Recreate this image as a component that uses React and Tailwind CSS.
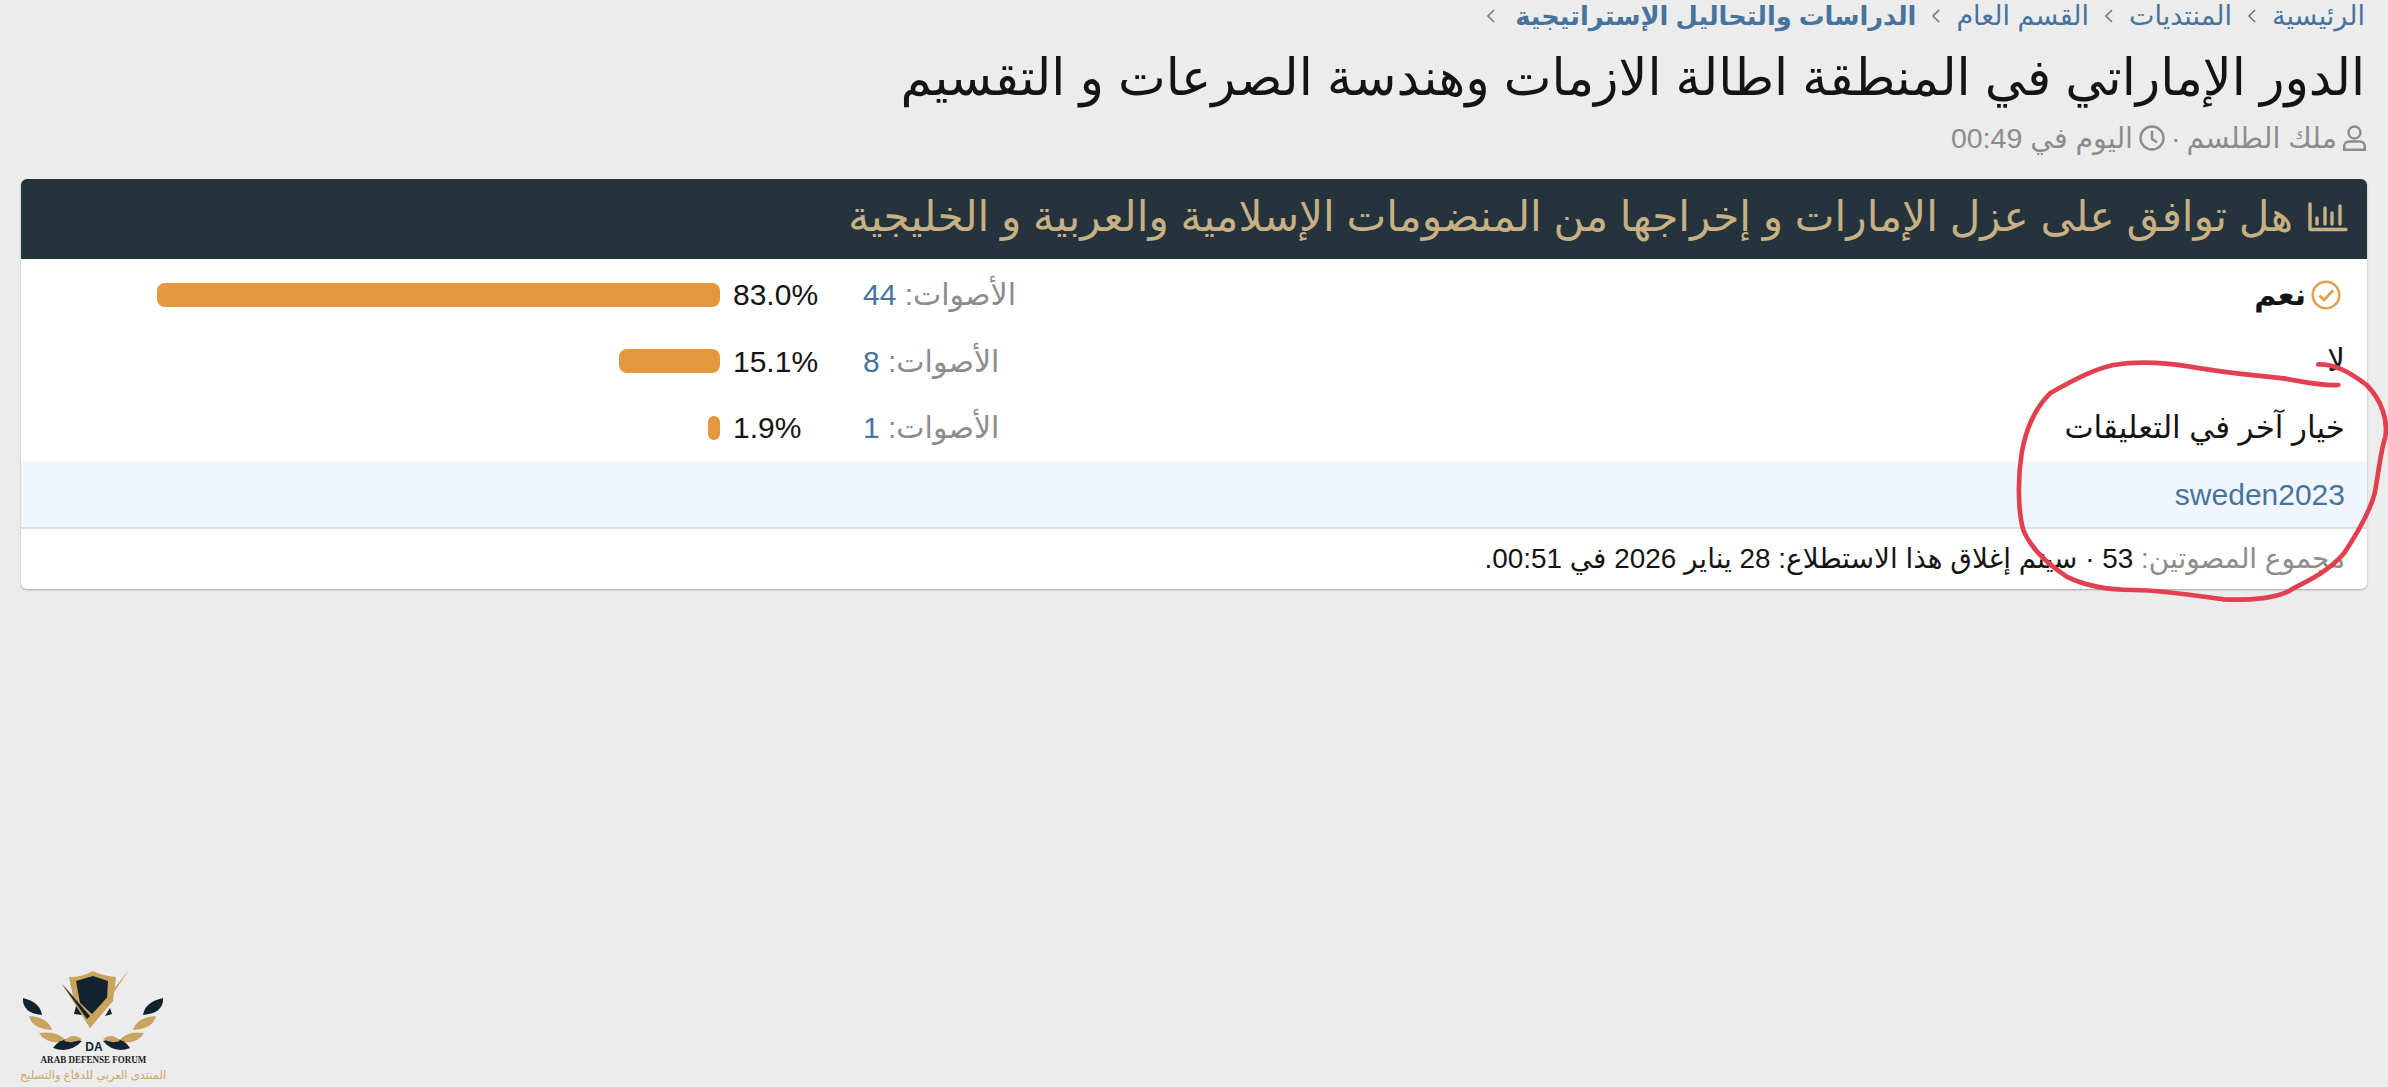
import React from "react";

const rows = [
  { label: "لا", votes: 8, pct: "15.1%", bar: "w-[101px]", labelClass: "text-[31px]" },
  { label: "خيار آخر في التعليقات", votes: 1, pct: "1.9%", bar: "w-[12px]", labelClass: "text-[31px]" },
];

function UserIcon() {
  return (
    <svg className="w-[23px] h-[26px]" viewBox="0 0 23 26" fill="none" stroke="currentColor" strokeWidth="2.4">
      <circle cx="11.5" cy="7.5" r="6" />
      <path d="M6 16.5h11a4.8 4.8 0 0 1 4.8 4.8v3.5H1.2v-3.5A4.8 4.8 0 0 1 6 16.5z" />
    </svg>
  );
}

function ClockIcon() {
  return (
    <svg className="w-[26px] h-[26px]" viewBox="0 0 26 26" fill="none" stroke="currentColor" strokeWidth="2.4">
      <circle cx="13" cy="13" r="11.5" />
      <path d="M13 6v8l5 3.5" />
    </svg>
  );
}

function PollIcon() {
  return (
    <svg className="w-[40px] h-[30px]" viewBox="0 0 40 30" fill="none" stroke="currentColor" strokeWidth="3.4" strokeLinecap="round" strokeLinejoin="round">
      <path d="M2 2v25.5h36" />
      <path d="M9 22v-6M17 22V6M24 22V11M32 22V4" />
    </svg>
  );
}

function CheckIcon() {
  return (
    <svg className="w-[30px] h-[30px] mr-[4px] text-[#dfa050]" viewBox="0 0 30 30" fill="none" stroke="currentColor" strokeWidth="2.6">
      <circle cx="15" cy="15" r="13.3" />
      <path d="M8.5 15.5l4.5 4.5 9-9.5" strokeWidth="2.8" />
    </svg>
  );
}

function Chevron({ className = "" }) {
  return (
    <svg className={`w-[10px] h-[16px] text-[#777] ${className}`} viewBox="0 0 10 16" fill="none" stroke="currentColor" strokeWidth="1.6">
      <path d="M8 2L2 8l6 6" />
    </svg>
  );
}

function VoteRow({ label, labelClass, icon, votes, pct, bar }) {
  return (
    <div className="h-[66.5px] flex items-center pr-[22px] pl-[136px] text-[30px] text-[#141414]">
      <div className={`flex items-center gap-[5px] w-[1101px] ${labelClass || ""}`}>
        {icon}
        <span>{label}</span>
      </div>
      <div className="flex-1 flex items-center justify-end">
        <div className="text-[#8c8c8c]">
          الأصوات: <span className="text-[#47749f]">{votes}</span>
        </div>
      </div>
      <div className="w-[130px] ml-[13px] text-left" dir="ltr">
        {pct}
      </div>
      <div className="w-[563px] flex justify-start">
        <div className={`h-[24px] rounded-[8px] bg-[#e3983d] ${bar}`} />
      </div>
    </div>
  );
}

function Logo() {
  return (
    <div className="w-[186px] flex flex-col items-center pb-[3px]">
      <svg className="w-[186px] h-[96px] -mb-[4px]" viewBox="0 0 186 96">
        {/* shield */}
        <path d="M69 16Q83 16 93 10Q103 15 116 16L113 40L90 67L74 40z" fill="#c9a45f" />
        <path d="M76 20L93 15L108 20L107 37L92 53L80 42z" fill="#12232f" />
        {/* check mark */}
        <path d="M62 23L90 67L129 9L92 55z" fill="#c9a45f" />
        <path d="M62 23L90 55L87 58z" fill="#12232f" />
        <path d="M76 45L74 53L82 54z" fill="#12232f" />
        <path d="M110 47L105 55L112 53z" fill="#12232f" />
        {/* left wing */}
        <path d="M23 37Q22 52 42 54Q40 41 23 37z" fill="#12232f" />
        <path d="M29 55Q32 68 52 69Q48 56 29 55z" fill="#c9a45f" />
        <path d="M39 72Q46 84 67 81Q59 69 39 72z" fill="#c9a45f" />
        <path d="M53 87Q70 93 82 80Q62 74 53 87z" fill="#12232f" />
        <path d="M64 80Q72 71 82 78Q73 83 64 80z" fill="#c9a45f" />
        {/* right wing */}
        <path d="M163 37Q164 52 143 54Q145 41 163 37z" fill="#12232f" />
        <path d="M156 55Q153 68 133 69Q137 56 156 55z" fill="#c9a45f" />
        <path d="M144 72Q137 84 118 81Q126 69 144 72z" fill="#c9a45f" />
        <path d="M130 87Q114 93 103 80Q122 74 130 87z" fill="#12232f" />
        <path d="M120 80Q112 71 103 78Q111 83 120 80z" fill="#c9a45f" />
        <text x="94" y="90" textAnchor="middle" fontFamily="Liberation Sans" fontWeight="700" fontSize="12" fill="#12232f">
          DA
        </text>
      </svg>
      <div
        className="font-['Liberation_Serif'] font-bold text-[11px] leading-[13px] text-[#222] scale-x-[0.82] whitespace-nowrap"
        dir="ltr"
      >
        ARAB DEFENSE FORUM
      </div>
      <div className="text-[11.5px] leading-[18px] text-[#c9a96a] whitespace-nowrap" dir="rtl">
        المنتدى العربي للدفاع والتسليح
      </div>
    </div>
  );
}

export default function App() {
  return (
    <div
      dir="rtl"
      className="relative h-screen overflow-hidden bg-[#ececec] font-['Liberation_Sans','DejaVu_Sans',sans-serif] flex flex-col justify-between"
    >
      <div className="px-[21px]">
        <nav className="h-[32px] flex items-center gap-[15px] text-[27px] text-[#47749f] pr-[2px]">
          <span>الرئيسية</span>
          <Chevron />
          <span>المنتديات</span>
          <Chevron />
          <span>القسم العام</span>
          <Chevron />
          <span className="font-bold text-[25.7px]">الدراسات والتحاليل الإستراتيجية</span>
          <Chevron className="mr-[4px]" />
        </nav>
        <h1 className="mt-[16px] pr-[2px] text-[50.7px] leading-[60px] font-normal text-[#141414]">
          الدور الإماراتي في المنطقة اطالة الازمات وهندسة الصرعات و التقسيم
        </h1>
        <div className="mt-[12px] flex items-center gap-[6px] text-[28.5px] leading-[36px] text-[#8c8c8c] pr-[1px]">
          <UserIcon />
          <span>ملك الطلسم</span>
          <span>·</span>
          <ClockIcon />
          <span>اليوم في 00:49</span>
        </div>

        <section className="mt-[23px] bg-white rounded-[6px] overflow-hidden shadow-[0_1px_2px_rgba(0,0,0,0.3)]">
          <header className="h-[80px] pb-[4px] bg-[#25333d] text-[#c7b183] text-[42.2px] flex items-center gap-[15px] pr-[19px]">
            <PollIcon />
            <span>هل توافق على عزل الإمارات و إخراجها من المنضومات الإسلامية والعربية و الخليجية</span>
          </header>
          <div className="pt-[2.5px]">
            <VoteRow label="نعم" labelClass="font-bold" icon={<CheckIcon />} votes={44} pct="83.0%" bar="w-[563px]" />
            {rows.map((row) => (
              <VoteRow key={row.votes} {...row} />
            ))}
          </div>
          <div className="h-[68px] bg-[#eff6fd] border-b-2 border-[#dddddd] flex items-center pr-[22px] text-[30px] text-[#47749f]">
            sweden2023
          </div>
          <div className="h-[60px] flex items-center pr-[22px] text-[27.9px] text-[#141414]">
            <span className="text-[#8c8c8c]">مجموع المصوتين:&nbsp;</span>
            <span>53 · سيتم إغلاق هذا الاستطلاع: 28 يناير 2026 في 00:51.</span>
          </div>
        </section>
      </div>

      <div dir="ltr">
        <Logo />
      </div>

      {/* pen mark drawn over the screenshot */}
      <svg
        className="absolute left-[1900px] top-[260px] w-[488px] h-[350px] pointer-events-none"
        viewBox="0 0 1464 1050"
        fill="none"
        stroke="#e2404f"
        strokeWidth="14"
        strokeLinecap="round"
        strokeLinejoin="round"
      >
        <path d="M1255 313C1300 312 1340 330 1400 375C1445 420 1464 480 1456 530C1440 580 1436 640 1424 700C1408 760 1372 820 1332 880C1290 930 1230 960 1180 985C1140 1015 1050 1022 970 1018C880 1005 780 990 700 990C640 990 560 980 500 950C440 910 390 860 370 810C355 760 352 660 365 580C375 520 400 450 450 400C510 365 590 325 640 315C700 305 780 305 870 320C950 335 1050 345 1150 355C1210 365 1260 378 1315 375" />
      </svg>
    </div>
  );
}
